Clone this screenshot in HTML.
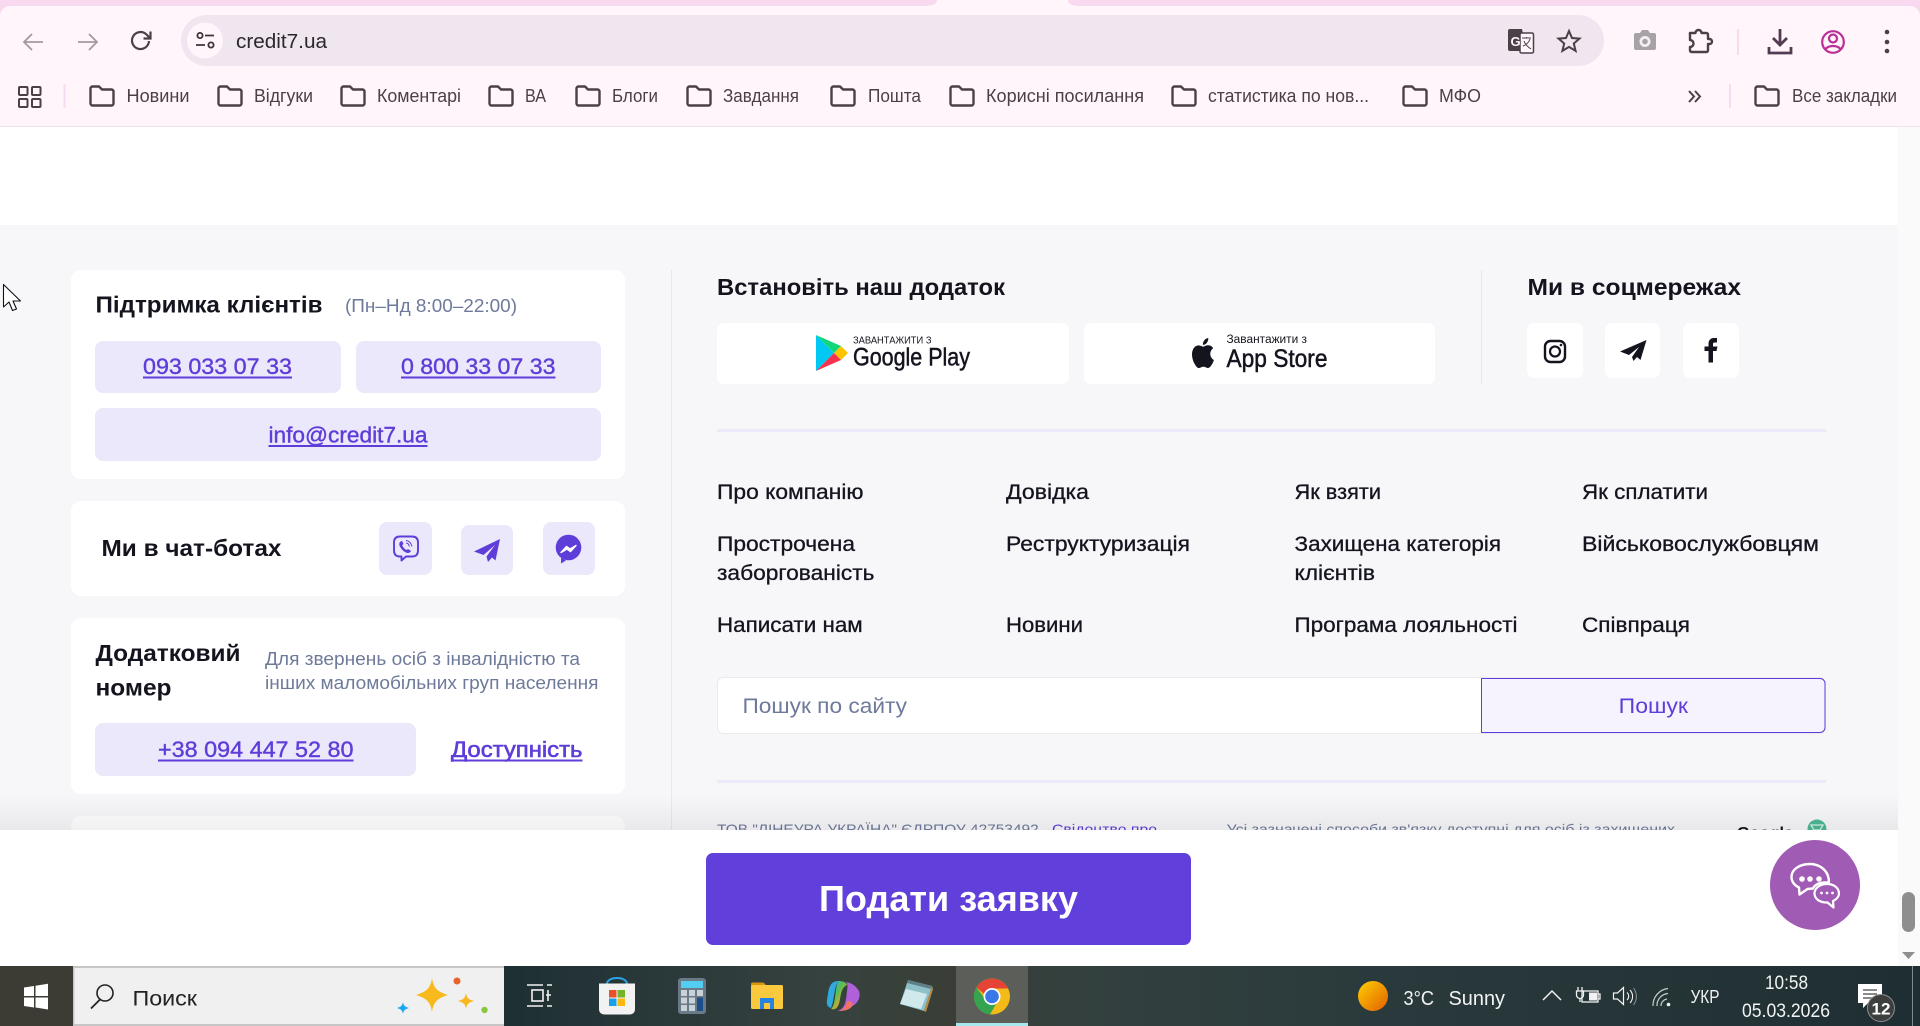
<!DOCTYPE html>
<html lang="uk"><head><meta charset="utf-8"><title>credit7.ua</title>
<style>
html,body{margin:0;padding:0;width:1920px;height:1026px;overflow:hidden;background:#fff}
svg{display:block}
text{font-family:"Liberation Sans","Noto Sans CJK SC",sans-serif;white-space:pre}
.h{font-weight:700;fill:#14141f;font-size:23px}
.l{fill:#14141f;font-size:21px;stroke:#14141f;stroke-width:.3}
.p{fill:#5f3dd9;font-size:22px;stroke:#5f3dd9;stroke-width:.4}
.g{fill:#6e7a9a;font-size:18px}
.b{fill:#4a4048;font-size:18px}
.w{fill:#f2f4f4;font-size:19px}
.f{fill:none;stroke:#4a4048;stroke-width:2.4;stroke-linejoin:round}
</style></head><body>
<svg width="1920" height="1026" viewBox="0 0 1920 1026" xmlns="http://www.w3.org/2000/svg" lang="uk">
<defs>
<symbol id="fo" viewBox="0 0 26 22" overflow="visible"><path class="f" d="M1.5 3.5a2 2 0 0 1 2-2h6.500l3 3h9.500a2 2 0 0 1 2 2v12a2 2 0 0 1-2 2h-19a2 2 0 0 1-2-2z"/></symbol>
<linearGradient id="sh" x1="0" y1="0" x2="0" y2="1"><stop offset="0" stop-color="#000" stop-opacity="0"/><stop offset="1" stop-color="#000" stop-opacity=".06"/></linearGradient>
<linearGradient id="tb" x1="0" y1="0" x2="1" y2="0"><stop offset="0" stop-color="#1d2d31"/><stop offset=".27" stop-color="#1f3034"/><stop offset=".43" stop-color="#36423f"/><stop offset=".5" stop-color="#3a3e36"/><stop offset=".56" stop-color="#33403e"/><stop offset=".72" stop-color="#2a3a3c"/><stop offset="1" stop-color="#1e2e32"/></linearGradient>
<linearGradient id="sun" x1="0" y1="0" x2="1" y2="1"><stop offset="0" stop-color="#ffd000"/><stop offset="1" stop-color="#e35f00"/></linearGradient>
<linearGradient id="cop" x1="0" y1="0" x2="1" y2="1"><stop offset="0" stop-color="#2aa8e8"/><stop offset=".45" stop-color="#5fc04a"/><stop offset=".7" stop-color="#f0a030"/><stop offset="1" stop-color="#d050c0"/></linearGradient>
</defs>

<!-- browser chrome -->
<rect width="1920" height="127" fill="#f8d9f0"/>
<path d="M0 127V16a10 10 0 0 1 10-10H925q12 0 12-6h131q0 6 12 6H1910a10 10 0 0 1 10 10V127z" fill="#fff5fb"/>
<rect y="126" width="1920" height="1.500" fill="#f0e0ea"/>
<path d="M43 42H24M32 34l-8 8 8 8" fill="none" stroke="#a39aa1" stroke-width="1.800"/>
<path d="M78 42h19M89 34l8 8-8 8" fill="none" stroke="#a39aa1" stroke-width="1.800"/>
<path d="M149 41a8.500 8.500 0 1 1-2.500-6.500L150 38M150.500 31.500V38.500H143.500" fill="none" stroke="#4a4048" stroke-width="2.200"/>
<rect x="181" y="15" width="1423" height="51" rx="25.500" fill="#f0e6ef"/>
<circle cx="205" cy="40.500" r="18" fill="#fff5fb"/>
<g fill="none" stroke="#3b3339" stroke-width="1.800"><circle cx="200" cy="35.500" r="2.600"/><path d="M205 35.500h9M196 45h9"/><circle cx="211" cy="45" r="2.600"/></g>
<text x="236" y="48" font-size="20" fill="#2d262b" textLength="91" lengthAdjust="spacingAndGlyphs">credit7.ua</text>

<!-- right browser icons -->
<path d="M1510 29h12l1 5v17h-13a2 2 0 0 1-2-2V31a2 2 0 0 1 2-2z" fill="#4a4048"/>
<rect x="1520" y="33" width="13.500" height="20" rx="1.500" fill="#fff5fb" stroke="#4a4048" stroke-width="1.500"/>
<text x="1510.500" y="46" font-size="13" font-weight="700" fill="#fff5fb">G</text>
<path d="M1522 38h9M1526.500 37v1.500M1530 39c-1.500 4-4 6-7 7M1524 41c1 3 4 6 7 8" fill="none" stroke="#4a4048" stroke-width="1"/>
<path d="M1569 31l3 7 7.500.6-5.700 4.900 1.800 7.400-6.600-4-6.600 4 1.800-7.400-5.700-4.900 7.500-.6z" fill="none" stroke="#4a4048" stroke-width="2"/>
<path d="M1636 33h4l2-3h6l2 3h4a2 2 0 0 1 2 2v13a2 2 0 0 1-2 2h-18a2 2 0 0 1-2-2V35a2 2 0 0 1 2-2z" fill="#a6a2a6"/>
<circle cx="1645" cy="41.500" r="5.500" fill="#f5eef3"/><circle cx="1645" cy="41.500" r="2.800" fill="#a6a2a6"/>
<path d="M1690 33h5.500a3 3 0 0 1 6 0h5a1.500 1.500 0 0 1 1.500 1.500V39h1.500a2.500 2.500 0 0 1 0 5H1708v6.500a1.500 1.500 0 0 1-1.500 1.500h-15a1.500 1.500 0 0 1-1.500-1.500V47a3.500 3.500 0 0 0 0-7v-5.500a1.500 1.500 0 0 1 0-1.500z" fill="none" stroke="#4a4048" stroke-width="2.400" stroke-linejoin="round"/>
<rect x="1737" y="29" width="2" height="26" fill="#f8d9f0"/>
<path d="M1780 29v15M1773 38l7 7 7-7M1769 47v6h22v-6" fill="none" stroke="#533c53" stroke-width="2.800"/>
<circle cx="1833" cy="42" r="10.800" fill="none" stroke="#b92f96" stroke-width="2.200"/><circle cx="1833" cy="38.500" r="4" fill="none" stroke="#b92f96" stroke-width="2.200"/><path d="M1825.500 49c3.500-4 11.500-4 15 0" fill="none" stroke="#b92f96" stroke-width="2.200"/>
<circle cx="1887" cy="32" r="2.300" fill="#4a4048"/><circle cx="1887" cy="42" r="2.300" fill="#4a4048"/><circle cx="1887" cy="51" r="2.300" fill="#4a4048"/>

<!-- bookmarks bar -->
<g fill="none" stroke="#4a4048" stroke-width="2"><rect x="19" y="87" width="8.500" height="8" rx="1"/><rect x="32" y="87" width="8.500" height="8" rx="1"/><rect x="19" y="99" width="8.500" height="8" rx="1"/><rect x="32" y="99" width="8.500" height="8" rx="1"/></g>
<rect x="63.500" y="84" width="2" height="24" fill="#f8d9f0"/>
<use href="#fo" x="89" y="85" width="26" height="22"/><text class="b" x="126.500" y="102" textLength="63" lengthAdjust="spacingAndGlyphs">Новини</text>
<use href="#fo" x="217" y="85" width="26" height="22"/><text class="b" x="254" y="102" textLength="59" lengthAdjust="spacingAndGlyphs">Відгуки</text>
<use href="#fo" x="340" y="85" width="26" height="22"/><text class="b" x="377" y="102" textLength="84" lengthAdjust="spacingAndGlyphs">Коментарі</text>
<use href="#fo" x="488" y="85" width="26" height="22"/><text class="b" x="525" y="102" textLength="21" lengthAdjust="spacingAndGlyphs">ВА</text>
<use href="#fo" x="575" y="85" width="26" height="22"/><text class="b" x="612" y="102" textLength="46" lengthAdjust="spacingAndGlyphs">Блоги</text>
<use href="#fo" x="686" y="85" width="26" height="22"/><text class="b" x="723" y="102" textLength="76" lengthAdjust="spacingAndGlyphs">Завдання</text>
<use href="#fo" x="830" y="85" width="26" height="22"/><text class="b" x="868" y="102" textLength="53" lengthAdjust="spacingAndGlyphs">Пошта</text>
<use href="#fo" x="949" y="85" width="26" height="22"/><text class="b" x="986" y="102" textLength="158" lengthAdjust="spacingAndGlyphs">Корисні посилання</text>
<use href="#fo" x="1171" y="85" width="26" height="22"/><text class="b" x="1208" y="102" textLength="161" lengthAdjust="spacingAndGlyphs">статистика по нов...</text>
<use href="#fo" x="1402" y="85" width="26" height="22"/><text class="b" x="1439" y="102" textLength="42" lengthAdjust="spacingAndGlyphs">МФО</text>
<path d="M1689 91l5 5.500-5 5.500M1695 91l5 5.500-5 5.500" fill="none" stroke="#4a4048" stroke-width="2"/>
<rect x="1729" y="84" width="2" height="24" fill="#f8d9f0"/>
<use href="#fo" x="1754" y="85" width="26" height="22"/><text class="b" x="1792" y="102" textLength="105" lengthAdjust="spacingAndGlyphs">Все закладки</text>

<!-- page -->
<rect y="127" width="1920" height="839" fill="#fff"/>
<rect y="225" width="1898" height="605" fill="#f7f7fa"/>
<rect x="1898" y="127" width="22" height="839" fill="#fafafa"/>
<rect x="671" y="270" width="1" height="560" fill="#e9e7f6"/>

<!-- left cards -->
<rect x="71" y="270" width="554" height="209" rx="10" fill="#fff"/>
<text class="h" x="95.500" y="312.500" textLength="227" lengthAdjust="spacingAndGlyphs">Підтримка клієнтів</text>
<text class="g" x="345" y="312" font-size="18.500" textLength="172" lengthAdjust="spacingAndGlyphs">(Пн–Нд 8:00–22:00)</text>
<rect x="95" y="341" width="246" height="52" rx="8" fill="#ece8fc"/>
<rect x="356" y="341" width="245" height="52" rx="8" fill="#ece8fc"/>
<rect x="95" y="408" width="506" height="53" rx="8" fill="#ece8fc"/>
<text class="p" x="143" y="374" textLength="149" lengthAdjust="spacingAndGlyphs">093 033 07 33</text><rect x="143" y="376.500" width="149" height="2" fill="#5f3dd9"/>
<text class="p" x="401" y="374" textLength="154.500" lengthAdjust="spacingAndGlyphs">0 800 33 07 33</text><rect x="401" y="376.500" width="154.500" height="2" fill="#5f3dd9"/>
<text class="p" x="268.500" y="442.500" textLength="159" lengthAdjust="spacingAndGlyphs">info@credit7.ua</text><rect x="268.500" y="445" width="159" height="2" fill="#5f3dd9"/>

<rect x="71" y="501" width="554" height="95" rx="10" fill="#fff"/>
<text class="h" x="101.500" y="556" textLength="180" lengthAdjust="spacingAndGlyphs">Ми в чат-ботах</text>
<rect x="379" y="522" width="53" height="53" rx="8" fill="#ece8fc"/>
<rect x="461" y="525" width="52" height="50" rx="8" fill="#ece8fc"/>
<rect x="543" y="522" width="52" height="53" rx="8" fill="#ece8fc"/>
<path d="M400 556.500c-4 0-6-2-6-6v-8c0-4 2-6 6-6h12c4 0 6 2 6 6v8c0 4-2 6-6 6h-6l-4.500 4v-4z" fill="none" stroke="#5f3dd9" stroke-width="1.900" stroke-linejoin="round"/>
<path d="M400.500 541.500c-1.800 1.500-1.500 3.500 0 6s4.500 5 7 5.500c1.500.3 3-.8 3.500-2l-3-2-1.500 1c-2-1-3.500-2.800-4.300-4.800l1.300-1.300-1.500-3z" fill="#5f3dd9"/>
<path d="M406 540.500c3 .3 5.500 2.800 5.800 6M406 543c1.800.2 3 1.500 3.300 3.500" fill="none" stroke="#5f3dd9" stroke-width="1"/>
<path d="M500 539L474 551.500l9.500 3.500L495 545l-8.500 11.500 1.500 5.500 4-4.500 3.500 3z" fill="#5f3dd9"/>
<circle cx="568.500" cy="547.500" r="12.800" fill="#5f3dd9"/><path d="M561 558v5.500l5-3z" fill="#5f3dd9"/>
<path d="M561 552.500l5.500-6 3.500 2.500 6-3.500-5.500 6-3.500-2.500z" fill="#fff" stroke="#fff" stroke-width="1.400" stroke-linejoin="round"/>

<rect x="71" y="618" width="554" height="176" rx="10" fill="#fff"/>
<text class="h" x="95.500" y="661" textLength="145" lengthAdjust="spacingAndGlyphs">Додатковий</text>
<text class="h" x="95.500" y="695.500" textLength="76" lengthAdjust="spacingAndGlyphs">номер</text>
<text class="g" x="265" y="665" textLength="315" lengthAdjust="spacingAndGlyphs">Для звернень осіб з інвалідністю та</text>
<text class="g" x="265" y="689" textLength="333.500" lengthAdjust="spacingAndGlyphs">інших маломобільних груп населення</text>
<rect x="95" y="723" width="321" height="53" rx="8" fill="#ece8fc"/>
<text class="p" x="158" y="757" textLength="195.500" lengthAdjust="spacingAndGlyphs">+38 094 447 52 80</text><rect x="158" y="759.500" width="195.500" height="2" fill="#5f3dd9"/>
<text class="p" x="451" y="757" textLength="131.500" lengthAdjust="spacingAndGlyphs" style="stroke-width:.6px">Доступність</text><rect x="451" y="759.500" width="131.500" height="2" fill="#5f3dd9"/>
<rect x="71" y="816" width="554" height="30" rx="10" fill="#fff"/>

<!-- right top -->
<text class="h" x="717" y="295" textLength="288" lengthAdjust="spacingAndGlyphs">Встановіть наш додаток</text>
<text class="h" x="1527.500" y="295" textLength="213.500" lengthAdjust="spacingAndGlyphs">Ми в соцмережах</text>
<rect x="717" y="323" width="352" height="61" rx="7" fill="#fff"/>
<rect x="1084" y="323" width="351" height="61" rx="7" fill="#fff"/>
<path d="M816 335v36l18-18z" fill="#00c8f4"/><path d="M816 335l18 18 7-7z" fill="#12d67a"/><path d="M841 346l7 7-7 7-7-7z" fill="#ffc400"/><path d="M816 371l18-18 7 7z" fill="#f5334f"/>
<text x="853" y="343.500" font-size="10.500" fill="#14141f" textLength="78.500" lengthAdjust="spacingAndGlyphs">ЗАВАНТАЖИТИ З</text>
<text x="853" y="365.500" font-size="25" fill="#14141f" stroke="#14141f" stroke-width=".5" textLength="117" lengthAdjust="spacingAndGlyphs">Google Play</text>
<path transform="translate(1189.500 338) scale(1.120 1.250)" fill="#14141f" d="M12.152 6.896c-.948 0-2.415-1.078-3.96-1.04-2.04.027-3.91 1.183-4.961 3.014-2.117 3.675-.546 9.103 1.519 12.09 1.013 1.454 2.208 3.09 3.792 3.039 1.52-.065 2.09-.987 3.935-.987 1.831 0 2.35.987 3.96.948 1.637-.026 2.676-1.48 3.676-2.948 1.156-1.688 1.636-3.325 1.662-3.415-.039-.013-3.182-1.221-3.22-4.857-.026-3.04 2.48-4.494 2.597-4.559-1.429-2.09-3.623-2.324-4.39-2.376-2-.156-3.675 1.09-4.61 1.09zM15.53 3.83c.843-1.012 1.4-2.427 1.245-3.83-1.207.052-2.662.805-3.532 1.818-.78.896-1.454 2.338-1.273 3.714 1.338.104 2.715-.688 3.559-1.701"/>
<text x="1226.500" y="343" font-size="11.500" fill="#14141f" textLength="80.500" lengthAdjust="spacingAndGlyphs">Завантажити з</text>
<text x="1226.500" y="367" font-size="25" fill="#14141f" stroke="#14141f" stroke-width=".5" textLength="101" lengthAdjust="spacingAndGlyphs">App Store</text>
<rect x="1481" y="270" width="1" height="114" fill="#e6e5f1"/>
<rect x="1527" y="323" width="56" height="55" rx="7" fill="#fff"/><rect x="1605" y="323" width="55" height="55" rx="7" fill="#fff"/><rect x="1683" y="323" width="56" height="55" rx="7" fill="#fff"/>
<rect x="1545" y="341" width="20" height="21" rx="5.500" fill="none" stroke="#14141f" stroke-width="2.400"/><circle cx="1555" cy="351.500" r="5" fill="none" stroke="#14141f" stroke-width="2.200"/><circle cx="1561" cy="345" r="1.300" fill="#14141f"/>
<path d="M1646.500 340L1620 351.500l9 3.500 10-8-7 10 1.500 4 3.500-4 3.500 3z" fill="#14141f"/>
<path d="M1717 338h-3.500a5 5 0 0 0-5 5v3.500h-4v4.500h4v11.500h4.500V351h3.500l1-4.500h-4.500V344a1.500 1.500 0 0 1 1.500-1.500h2.500z" fill="#14141f"/>
<rect x="717" y="429" width="1109" height="3" fill="#ece9fb"/>

<!-- links -->
<g>
<text class="l" x="717" y="499" textLength="146.500" lengthAdjust="spacingAndGlyphs">Про компанію</text>
<text class="l" x="1006" y="499" textLength="83" lengthAdjust="spacingAndGlyphs">Довідка</text>
<text class="l" x="1294.500" y="499" textLength="86.500" lengthAdjust="spacingAndGlyphs">Як взяти</text>
<text class="l" x="1582" y="499" textLength="126" lengthAdjust="spacingAndGlyphs">Як сплатити</text>
<text class="l" x="717" y="551" textLength="138" lengthAdjust="spacingAndGlyphs">Прострочена</text>
<text class="l" x="1006" y="551" textLength="184" lengthAdjust="spacingAndGlyphs">Реструктуризація</text>
<text class="l" x="1294.500" y="551" textLength="206.500" lengthAdjust="spacingAndGlyphs">Захищена категорія</text>
<text class="l" x="1582" y="551" textLength="237" lengthAdjust="spacingAndGlyphs">Військовослужбовцям</text>
<text class="l" x="717" y="580" textLength="157.500" lengthAdjust="spacingAndGlyphs">заборгованість</text>
<text class="l" x="1294.500" y="580" textLength="80.500" lengthAdjust="spacingAndGlyphs">клієнтів</text>
<text class="l" x="717" y="632" textLength="145.700" lengthAdjust="spacingAndGlyphs">Написати нам</text>
<text class="l" x="1006" y="632" textLength="77" lengthAdjust="spacingAndGlyphs">Новини</text>
<text class="l" x="1294.500" y="632" textLength="223" lengthAdjust="spacingAndGlyphs">Програма лояльності</text>
<text class="l" x="1582" y="632" textLength="108" lengthAdjust="spacingAndGlyphs">Співпраця</text>
</g>

<!-- search -->
<rect x="717.500" y="677.500" width="1108" height="56" rx="6" fill="#fff" stroke="#ebebef"/>
<text x="742.500" y="713" font-size="21" fill="#6e7a9a" textLength="164.500" lengthAdjust="spacingAndGlyphs">Пошук по сайту</text>
<path d="M1481.500 678.500H1820a5 5 0 0 1 5 5v44a5 5 0 0 1-5 5H1481.500z" fill="#f6f3ff" stroke="#5f3dd9" stroke-width="1"/>
<text x="1618.700" y="713" font-size="21" fill="#5f3dd9" textLength="69.300" lengthAdjust="spacingAndGlyphs">Пошук</text>
<rect x="717" y="780" width="1109" height="3" fill="#ece9fb"/>

<!-- clipped footer text -->
<text x="717" y="834" font-size="14" fill="#6e7a9a" textLength="326" lengthAdjust="spacingAndGlyphs">ТОВ "ЛІНЕУРА УКРАЇНА" ЄДРПОУ 42753492.</text>
<text x="1052" y="834" font-size="14" fill="#5f3dd9" textLength="105" lengthAdjust="spacingAndGlyphs">Свідоцтво про</text>
<text x="1226.500" y="834" font-size="14" fill="#6e7a9a" textLength="448.500" lengthAdjust="spacingAndGlyphs">Усі зазначені способи зв'язку доступні для осіб із захищених</text>
<text x="1737" y="838" font-size="16" font-weight="700" fill="#14141f" textLength="56" lengthAdjust="spacingAndGlyphs">Google</text>
<circle cx="1817" cy="829" r="9.500" fill="#4eb896"/><path d="M1811 825h12l-3 5h-6z" fill="none" stroke="#d8f2e8" stroke-width="1.300"/>

<!-- white sticky bar -->
<rect y="795" width="1898" height="35" fill="url(#sh)"/>
<rect y="830" width="1898" height="136" fill="#fff"/>
<rect x="706" y="853" width="485" height="92" rx="7" fill="#613fdb"/>
<text x="819" y="911" font-size="36" font-weight="700" fill="#fff" textLength="259" lengthAdjust="spacingAndGlyphs">Подати заявку</text>
<circle cx="1815" cy="885" r="45" fill="#a05bb4"/>
<path d="M1810 864c-10.500 0-18.500 5.500-18.500 13 0 4.500 3 8.500 7.500 10.500l.5 7 8-5.500 5.500-.5c1.500-3.500 6-6 12-6 1.500 0 3 .2 3.500.5.500-1.500.5-3 0-5-1.500-8-9-14-18.500-14z" fill="none" stroke="#fff" stroke-width="2.400" stroke-linejoin="round"/>
<circle cx="1802" cy="879" r="2.800" fill="#fff"/><circle cx="1810" cy="879" r="2.800" fill="#fff"/><circle cx="1819" cy="879" r="2.800" fill="#fff"/>
<path d="M1827 884c-7 0-12.500 4-12.500 9.500s5.500 9 12 9h1l6 5-.5-6.500c3.500-1.500 6-4.500 6-7.500 0-5.500-5-9.500-12-9.500z" fill="#a05bb4" stroke="#fff" stroke-width="2.200" stroke-linejoin="round"/>
<circle cx="1821.500" cy="893" r="1.400" fill="#fff"/><circle cx="1827" cy="893" r="1.400" fill="#fff"/><circle cx="1832.500" cy="893" r="1.400" fill="#fff"/>

<!-- scrollbar -->
<rect x="1902" y="892" width="13" height="40" rx="6.500" fill="#8e8e8e"/>
<path d="M1902 952h13l-6.500 7z" fill="#8e8e8e"/>

<!-- cursor -->
<path d="M3.500 284.500V307l5.500-5 3.500 8.500 4-1.500-3.500-8h7.500z" fill="#fff" stroke="#111" stroke-width="1.100" stroke-linejoin="round"/>

<!-- taskbar -->
<rect y="966" width="1920" height="60" fill="url(#tb)"/>
<rect width="73" y="966" height="60" fill="#3c3c34"/>
<path d="M24 987.500l10-1.500v10H24zM35.500 985.800l12.500-2v12.200H35.500zM24 997.500h10v10l-10-1.500zM35.500 997.500H48v12l-12.500-2z" fill="#fff"/>
<rect x="73" y="966" width="431" height="60" fill="#f0f0f0"/>
<rect x="73" y="966" width="431" height="2" fill="#c6c6c6"/><rect x="73" y="1024" width="431" height="2" fill="#c6c6c6"/><rect x="73" y="966" width="1.500" height="60" fill="#c6c6c6"/>
<circle cx="105" cy="993" r="8" fill="none" stroke="#222" stroke-width="1.600"/><path d="M100 999.500l-9 9" stroke="#222" stroke-width="1.800"/>
<text x="132.500" y="1005.500" font-size="21" fill="#222" textLength="64.500" lengthAdjust="spacingAndGlyphs">Поиск</text>
<path d="M432 978c1.500 10 5 13.500 16 17-11 3.500-14.500 7-16 17-1.500-10-5-13.500-16-17 11-3.500 14.500-7 16-17z" fill="#f8b91c"/>
<path d="M466 993c.8 5 2.500 6.500 8 8-5.500 1.500-7.200 3-8 8-.8-5-2.500-6.500-8-8 5.500-1.500 7.200-3 8-8z" fill="#f8b91c"/>
<path d="M403 1002c.6 3.500 1.800 4.700 6 6-4.200 1.300-5.400 2.500-6 6-.6-3.500-1.800-4.700-6-6 4.200-1.300 5.400-2.500 6-6z" fill="#19a7ef"/>
<circle cx="457" cy="981" r="3.500" fill="#e8622c"/><circle cx="484.500" cy="1010" r="3.200" fill="#8cc63f"/>
<g fill="none" stroke="#f2f2f2" stroke-width="1.600"><path d="M527 985h16M547 985h5M527 1006h16M547 1006h5M548 990v11M546 995h5"/><rect x="532" y="990" width="11" height="11"/></g>
<!-- store -->
<path d="M607 984c0-8 20-8 20 0" fill="none" stroke="#2aa5e8" stroke-width="2"/>
<path d="M599 983.500h36v26a5 5 0 0 1-5 5h-26a5 5 0 0 1-5-5z" fill="#f2f2f2"/>
<rect x="609" y="990" width="7.500" height="7.500" fill="#e8512a"/><rect x="617.500" y="990" width="7.500" height="7.500" fill="#72b52a"/><rect x="609" y="998.500" width="7.500" height="7.500" fill="#19a0ea"/><rect x="617.500" y="998.500" width="7.500" height="7.500" fill="#fbb80f"/>
<!-- calc -->
<rect x="678" y="978" width="28" height="36" rx="3" fill="#6a7a86"/><rect x="681" y="981" width="22" height="7" fill="#53cdf2"/>
<g fill="#c9d2d8"><rect x="681" y="990" width="6" height="6"/><rect x="689" y="990" width="6" height="6"/><rect x="697" y="990" width="6" height="6"/><rect x="681" y="997.500" width="6" height="6"/><rect x="689" y="997.500" width="6" height="6"/><rect x="681" y="1005" width="6" height="6"/><rect x="689" y="1005" width="6" height="6"/></g><rect x="697" y="997.500" width="6" height="13.500" fill="#1d4e89"/>
<!-- explorer -->
<path d="M751 984a1.500 1.500 0 0 1 1.500-1.500h11l3 3h-15.500z" fill="#d8960e"/><rect x="751" y="985" width="32" height="24" rx="1.500" fill="#fbc93d"/><path d="M760 1009v-11h14v11h-4v-6h-6v6z" fill="#2684e0"/>
<!-- copilot -->
<path d="M838 981c-7 0-9 6-10 13-1 7-3 12 3 14 3-6 3-20 7-27z" fill="#30a9e0"/><path d="M838 981c5 0 8 1 9 4-5 2-6 8-7 14-1 6-3 12-9 10 5-4 4-22 7-28z" fill="url(#cop)"/><path d="M846 982c6 1 10 4 13 9 2 5-1 12-5 14-5 4-12 6-17 6 9-2 9-12 10-20 .6-4 1-7-1-9z" fill="#b060d8"/><path d="M839 1011c7 0 13-2 14-7-1-2-3-3-6-3-1 5-3 8-8 10z" fill="#f0706a"/>
<!-- notepad -->
<path d="M908 980l24 6-8 25-24-7z" fill="#8fc0c8"/><path d="M908 980l24 6-1 3-24-6z" fill="#5f7f88"/><path d="M906 989l21 5-6 15-21-5z" fill="#cfe9ec"/><path d="M924 1011l8-25 1 3-7 23z" fill="#b98c46"/>
<!-- chrome -->
<rect x="956" y="966" width="72" height="60" fill="#5c5f59"/><rect x="956" y="1023" width="72" height="3" fill="#a6e8ee"/>
<circle cx="992" cy="996.500" r="18" fill="#f2bb18"/>
<path d="M976.400 987.500A18 18 0 0 1 1008 988.500H992a8.500 8.500 0 0 0-8 5.200z" fill="#e54335"/>
<path d="M976.400 987.500A18 18 0 0 0 990 1014.400l7.800-13.300a8.500 8.500 0 0 1-13.300-3z" fill="#34a44e"/>
<circle cx="992" cy="996.500" r="8.500" fill="#fff"/><circle cx="992" cy="996.500" r="6.800" fill="#3a78e8"/>

<!-- tray -->
<circle cx="1373" cy="996" r="15" fill="url(#sun)"/>
<text class="w" x="1403.500" y="1005" style="font-size:20px" textLength="30.500" lengthAdjust="spacingAndGlyphs">3°C</text>
<text class="w" x="1448.500" y="1005" style="font-size:20px" textLength="56.500" lengthAdjust="spacingAndGlyphs">Sunny</text>
<path d="M1543 1000l9-9 9 9" fill="none" stroke="#f2f2f2" stroke-width="1.500"/>
<g fill="none" stroke="#f2f2f2" stroke-width="1.300"><rect x="1582" y="991" width="16" height="11"/><path d="M1598.500 994h1.500v5h-1.500M1578 987v4M1582 987v4M1576.500 991h7v4a3.500 3.500 0 0 1-7 0zM1580 998.500v3.500"/></g><rect x="1589" y="992.500" width="8" height="8" fill="#f2f2f2"/>
<path d="M1613.500 993h4l6-5.500v17l-6-5.500h-4z" fill="none" stroke="#f2f2f2" stroke-width="1.200"/><path d="M1627 992.500a5 5 0 0 1 0 7.500M1630 990a9.500 9.500 0 0 1 0 13" fill="none" stroke="#f2f2f2" stroke-width="1.100"/><path d="M1633.500 988a14 14 0 0 1 0 17" fill="none" stroke="#8a9494" stroke-width="1"/>
<path d="M1653 1006a17 17 0 0 1 15-17.500M1657 1006a12 12 0 0 1 11-12.500M1661 1006a7 7 0 0 1 6-7" fill="none" stroke="#c9cecf" stroke-width="1.200"/><circle cx="1668.500" cy="1004.500" r="1.800" fill="#f2f2f2"/>
<text class="w" x="1690.500" y="1003" style="font-size:18px" textLength="29" lengthAdjust="spacingAndGlyphs">УКР</text>
<text class="w" x="1765" y="989" textLength="43" lengthAdjust="spacingAndGlyphs">10:58</text>
<text class="w" x="1742" y="1017" textLength="88" lengthAdjust="spacingAndGlyphs">05.03.2026</text>
<path d="M1858 984h24v19h-14l-5 5v-5h-5z" fill="#fff"/><path d="M1863 990h14M1863 994h14M1863 998h14" stroke="#444" stroke-width="1.200"/>
<circle cx="1881" cy="1008" r="13.500" fill="#3c3f3d" stroke="#8c8f8d" stroke-width="1"/>
<text x="1881" y="1014.500" font-size="17" font-weight="700" fill="#fff" text-anchor="middle">12</text>
<rect x="1912" y="966" width="1" height="60" fill="#7f8a8b"/>
</svg>
</body></html>
